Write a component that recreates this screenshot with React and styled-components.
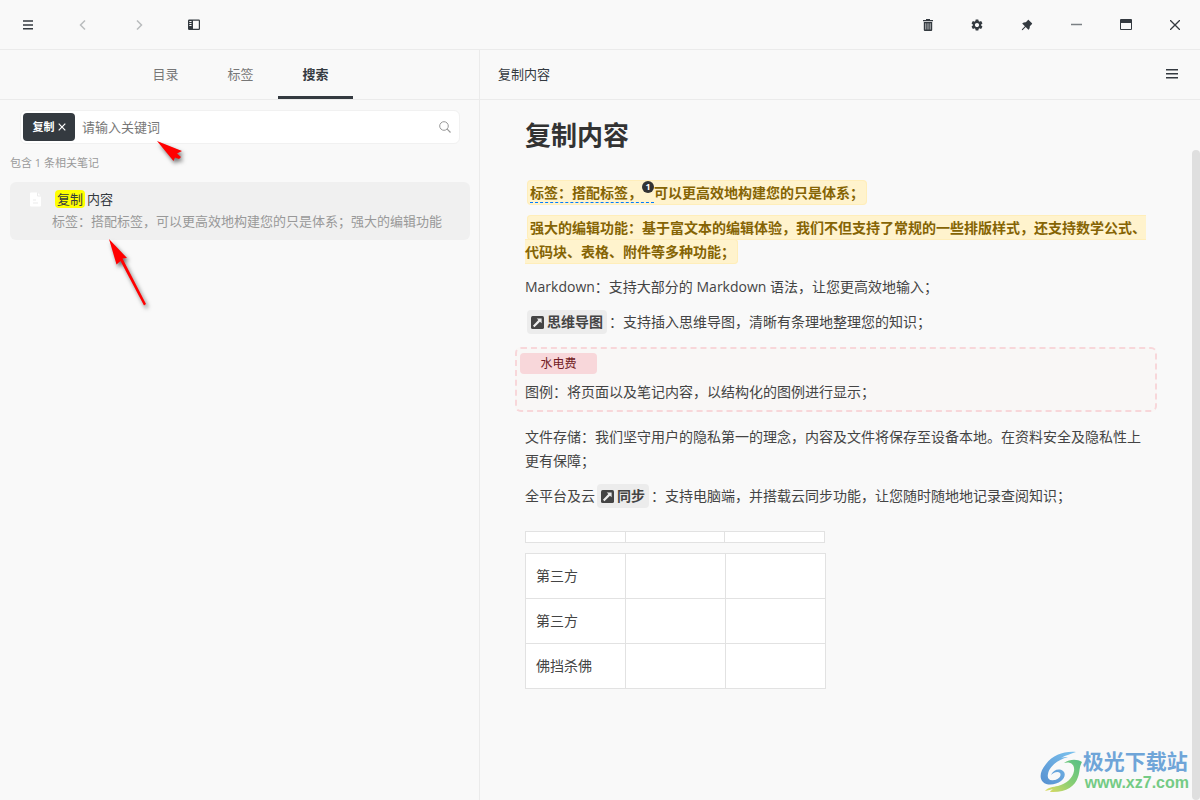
import React from "react";
import styled, { createGlobalStyle, css } from "styled-components";
import { MdSettings } from "react-icons/md";
import { AiFillPushpin } from "react-icons/ai";

const GlobalStyle = createGlobalStyle`
  * {
    box-sizing: border-box;
  }

  body {
    margin: 0;
    background: #f9f9f9;
    color: #343a40;
    font-family: "Open Sans", "Noto Sans CJK SC", sans-serif;
    font-size: 13px;
    line-height: 20px;
    text-spacing-trim: space-all;
  }

  button, input {
    font: inherit;
    color: inherit;
    border: 0;
    padding: 0;
    background: none;
  }

  svg {
    display: block;
  }
`;

const Page = styled.div`
  position: relative;
  min-height: 100vh;
  display: flex;
  flex-direction: column;
`;

const Toolbar = styled.header`
  display: flex;
  justify-content: space-between;
  height: 50px;
  border-bottom: 1px solid #ebebeb;
`;

const ToolGroup = styled.div`
  display: grid;
  grid-auto-flow: column;
  grid-auto-columns: 1fr;
  width: ${props => props.$width}px;
`;

const ToolButton = styled.button`
  display: flex;
  align-items: center;
  justify-content: center;
  color: ${props => (props.disabled ? "#b9bcbe" : "#343a40")};
`;

const Columns = styled.div`
  flex: 1;
  display: grid;
  grid-template-columns: 2fr 3fr;
`;

const Sidebar = styled.aside`
  border-right: 1px solid #ebebeb;
`;

const Tabs = styled.nav`
  display: flex;
  justify-content: center;
  height: 50px;
  padding-left: 2px;
  border-bottom: 1px solid #ebebeb;
`;

const Tab = styled.button`
  width: 75px;
  padding-top: 1px;
  color: #777;
  border-bottom: 3px solid transparent;
  ${props =>
    props.$active &&
    css`
      color: #343a40;
      font-weight: 600;
      border-bottom-color: #343a40;
    `}
`;

const SearchBox = styled.form`
  display: flex;
  align-items: center;
  height: 34px;
  margin: 10px 19px 0 20px;
  padding: 2px;
  background: #fff;
  border: 1px solid #f1f1f1;
  border-radius: 6px;
`;

const Chip = styled.button`
  display: flex;
  align-items: center;
  justify-content: center;
  gap: 3px;
  width: 52px;
  height: 28px;
  background: #343a40;
  border-radius: 4px;
  color: #fff;
  font-size: 11px;
  font-weight: 600;
`;

const SearchInput = styled.input`
  flex: 1;
  min-width: 0;
  padding: 0 7px 1px;
  outline: none;

  &::placeholder {
    color: #777;
    opacity: 1;
  }
`;

const SearchButton = styled.button`
  margin-right: 6px;
  color: #999;
`;

const ResultCount = styled.p`
  margin: 9px 10px;
  font-size: 11px;
  color: #999;
`;

const Result = styled.a`
  display: block;
  height: 58px;
  margin: 0 9px 0 10px;
  padding: 6px 18px 0;
  background: #f0f0f0;
  border-radius: 6px;
  color: inherit;
  text-decoration: none;
`;

const ResultTitle = styled.div`
  display: flex;
  align-items: center;
  gap: 12px;
  height: 22px;
`;

const Match = styled.mark`
  margin-right: 2px;
  padding: 0 2px;
  background: #ff0;
  border-radius: 4px;
  color: inherit;
`;

const ResultText = styled.div`
  padding-left: 24px;
  color: #999;
  line-height: 22px;
  white-space: nowrap;
  overflow: hidden;
`;

const Note = styled.main`
  display: grid;
  grid-template-rows: 50px 1fr;
`;

const NoteBar = styled.div`
  display: flex;
  align-items: center;
  justify-content: space-between;
  padding: 0 22px 1px 18px;
  border-bottom: 1px solid #ebebeb;
`;

const NoteBody = styled.div`
  display: flex;
`;

const ScrollThumb = styled.div`
  flex: none;
  width: 8px;
  margin-top: 50px;
  background: #dfdfdf;
  border-radius: 4px;
`;

const Article = styled.article`
  flex: 1;
  padding: 15px 45px 20px;
  color: #444;
  font-size: 14px;
  line-height: 24px;
`;

const Title = styled.h1`
  margin: 0 0 26px;
  color: #333;
  font-size: 26px;
  line-height: 40px;
`;

const Paragraph = styled.p`
  margin: 0 0 11px;
`;

const Highlight = styled.strong`
  margin-left: 2px;
  padding: 2px;
  background: #fff3cd;
  border: 1px solid #ffeeba;
  border-radius: 4px;
  color: #856404;
`;

const Annotated = styled.span`
  border-bottom: 1px dashed #007bff;
`;

const NoteNumber = styled.sup`
  display: inline-flex;
  align-items: center;
  justify-content: center;
  width: 12px;
  height: 12px;
  background: #333;
  border-radius: 50%;
  color: #fff;
  font-size: 9px;
  line-height: 12px;
  vertical-align: 8px;
`;

const NoteLink = styled.a`
  display: inline-flex;
  align-items: center;
  gap: 3px;
  margin: 0 2px;
  padding: 0 4px;
  background: #ececec;
  border-radius: 4px;
  color: inherit;
  font-weight: bold;
  text-decoration: none;
  vertical-align: top;
`;

const Legend = styled.section`
  margin: 13px -10px;
  padding: 4px 8px 6px;
  background: #f9f7f6;
  border: 2px dashed #f8d7da;
  border-radius: 6px;
`;

const LegendTag = styled.div`
  width: 77px;
  margin: 0 0 6px -5px;
  background: #f8d7da;
  border-radius: 4px;
  color: #721c24;
  font-size: 12px;
  line-height: 21px;
  text-align: center;
`;

const Table = styled.table`
  width: ${props => props.$width}px;
  margin-top: ${props => props.$top}px;
  border-collapse: collapse;
  table-layout: fixed;
  background: #fff;

  th,
  td {
    height: ${props => props.$row}px;
    padding: 0 10px;
    border: 1px solid #e2e2e2;
    text-align: left;
  }
`;

const Arrow = styled.svg`
  position: absolute;
  left: ${props => props.$x}px;
  top: ${props => props.$y}px;
  filter: drop-shadow(2px 3px 2px rgba(0, 0, 0, 0.55));
  overflow: visible;
  pointer-events: none;
`;

const Watermark = styled.a`
  position: absolute;
  right: 11px;
  bottom: 7px;
  display: flex;
  align-items: center;
  text-decoration: none;
`;

const SiteName = styled.div`
  color: #6fa5d8;
  font-size: 21px;
  font-weight: bold;
  line-height: 23px;
`;

const SiteUrl = styled.div`
  padding-left: 2px;
  color: #74cb85;
  font-family: "Liberation Sans", sans-serif;
  font-size: 16px;
  font-weight: bold;
  line-height: 20px;
`;

const Lines = () => (
  <svg width="10" height="10" viewBox="0 0 10 10" fill="currentColor">
    <path d="M0 .3h10v1.500H0zM0 4.200h10v1.500H0zM0 8.100h10v1.500H0z" />
  </svg>
);

const Chevron = ({ d }) => (
  <svg width="12" height="12" viewBox="0 0 12 12" fill="none" stroke="currentColor" strokeWidth="1.500">
    <path d={d} />
  </svg>
);

const PanelIcon = () => (
  <svg width="12" height="12" viewBox="0 0 12 12" fill="currentColor">
    <path
      fillRule="evenodd"
      d="M1.200.5h9.600A1.200 1.200 0 0 1 12 1.700v8.100A1.200 1.200 0 0 1 10.800 11H1.200A1.200 1.200 0 0 1 0 9.800V1.700A1.200 1.200 0 0 1 1.200.5zM5 1.700v8.100h5.800V1.700zM1.300 2v1h2.200V2zM1.300 4v1h2.200V4zM1.300 6v1h2.200V6z"
    />
  </svg>
);

const TrashIcon = () => (
  <svg width="10" height="12" viewBox="0 0 10 12" fill="currentColor">
    <path
      fillRule="evenodd"
      d="M3 0h4v1h3v1.300H0V1h3zM.8 3h8.400v8a1 1 0 0 1-1 1H1.800a1 1 0 0 1-1-1zM2.500 4.300v6.200h.7V4.300zM4.650 4.300v6.200h.7V4.300zM6.800 4.300v6.200h.7V4.300z"
    />
  </svg>
);

const WindowIcon = () => (
  <svg width="12" height="11" viewBox="0 0 12 11" fill="currentColor">
    <path
      fillRule="evenodd"
      d="M1 0h10a1 1 0 0 1 1 1v9a1 1 0 0 1-1 1H1a1 1 0 0 1-1-1V1a1 1 0 0 1 1-1zM1 4v6h10V4z"
    />
  </svg>
);

const JumpIcon = () => (
  <svg width="13" height="13" viewBox="0 0 12 12">
    <rect width="12" height="12" rx="1.500" fill="#444" />
    <path d="M5.300 2.200h4.500v4.500L8.300 5.200 3.200 10.300 1.800 8.900l5-5.200z" fill="#ececec" />
  </svg>
);

const FileIcon = () => (
  <svg width="15" height="15" viewBox="0 0 15 15">
    <path d="M3 .5h6.500L13 4v9.500a1 1 0 0 1-1 1H3a1 1 0 0 1-1-1v-12a1 1 0 0 1 1-1z" fill="#fff" />
    <path d="M9.500.5V4H13M5 8h3M5 11h5" fill="none" stroke="#ebebeb" />
  </svg>
);

const SiteLogo = () => (
  <svg width="43" height="42" viewBox="0 0 43 42">
    <defs>
      <linearGradient id="sky" x1="0" y1="1" x2="1" y2="0">
        <stop offset="0" stopColor="#568fd0" />
        <stop offset="1" stopColor="#7cc3ee" />
      </linearGradient>
      <linearGradient id="leaf" x1="0" y1="1" x2="1" y2="0">
        <stop offset="0" stopColor="#e2dc62" />
        <stop offset="0.5" stopColor="#86ce74" />
        <stop offset="1" stopColor="#55bf86" />
      </linearGradient>
    </defs>
    <path
      d="M36 1C24 0 13 4 6 13 0 20-1 27 3 31c4 4 13 3 18-1 4-3 5-8 2-10-4-3-10-1-12 4 3-3 7-4 9-2 2 3-2 7-6 7-5 1-7-2-6-6 1-7 9-14 20-17-3 0-5 0-7 1 5-3 10-4 15-6z"
      fill="url(#sky)"
    />
    <path
      d="M42 11c-5-3-12-3-18 1 7-2 11 2 10 8-1 7-8 13-16 15-5 1-10 1-13 5 3-1 6-1 8-2-1 1-2 1-3 3 15 1 25-5 28-15 2-5 1-10 4-15z"
      fill="url(#leaf)"
    />
  </svg>
);

const rows = ["第三方", "第三方", "佛挡杀佛"];

const App = () => {
  return (
    <Page>
      <GlobalStyle />
      <Toolbar>
        <ToolGroup $width={222}>
          <ToolButton aria-label="菜单">
            <Lines />
          </ToolButton>
          <ToolButton aria-label="后退" disabled>
            <Chevron d="M8 1.500 3.500 6 8 10.500" />
          </ToolButton>
          <ToolButton aria-label="前进" disabled>
            <Chevron d="M4 1.500 8.500 6 4 10.500" />
          </ToolButton>
          <ToolButton aria-label="侧边栏">
            <PanelIcon />
          </ToolButton>
        </ToolGroup>
        <ToolGroup $width={297}>
          <ToolButton aria-label="回收站">
            <TrashIcon />
          </ToolButton>
          <ToolButton aria-label="设置">
            <MdSettings size={14} />
          </ToolButton>
          <ToolButton aria-label="置顶">
            <AiFillPushpin size={14} />
          </ToolButton>
          <ToolButton aria-label="最小化">
            <svg width="11" height="11" viewBox="0 0 11 11">
              <path d="M0 5.500h11" stroke="#7b8084" strokeWidth="1.500" />
            </svg>
          </ToolButton>
          <ToolButton aria-label="最大化">
            <WindowIcon />
          </ToolButton>
          <ToolButton aria-label="关闭">
            <svg width="10" height="10" viewBox="0 0 10 10">
              <path d="M0 0l10 10M10 0 0 10" stroke="currentColor" strokeWidth="1.300" />
            </svg>
          </ToolButton>
        </ToolGroup>
      </Toolbar>

      <Columns>
        <Sidebar>
          <Tabs>
            <Tab>目录</Tab>
            <Tab>标签</Tab>
            <Tab $active>搜索</Tab>
          </Tabs>
          <SearchBox>
            <Chip type="button">
              复制
              <svg width="8" height="8" viewBox="0 0 8 8">
                <path d="M.7.7l6.600 6.600M7.300.7.7 7.300" stroke="#fff" strokeWidth="1.200" />
              </svg>
            </Chip>
            <SearchInput aria-label="关键词" placeholder="请输入关键词" />
            <SearchButton type="button" aria-label="搜索">
              <svg width="12" height="12" viewBox="0 0 12 12" fill="none" stroke="currentColor">
                <circle cx="5" cy="5" r="4.300" />
                <path d="M8.200 8.200l3.300 3.300" strokeWidth="1.200" />
              </svg>
            </SearchButton>
          </SearchBox>
          <ResultCount>包含 1 条相关笔记</ResultCount>
          <Result href="#note">
            <ResultTitle>
              <FileIcon />
              <span>
                <Match>复制</Match>内容
              </span>
            </ResultTitle>
            <ResultText>标签：搭配标签，可以更高效地构建您的只是体系；强大的编辑功能</ResultText>
          </Result>
        </Sidebar>

        <Note>
          <NoteBar>
            <span>复制内容</span>
            <ToolButton aria-label="大纲">
              <svg width="12" height="12" viewBox="0 0 12 12" fill="currentColor">
                <path d="M0 1h12v1.500H0zM0 5h12v1.500H0zM0 9h12v1.500H0z" />
              </svg>
            </ToolButton>
          </NoteBar>
          <NoteBody>
            <Article id="note">
              <Title>复制内容</Title>
              <Paragraph>
                <Highlight>
                  <Annotated>
                    标签：搭配标签，<NoteNumber>1</NoteNumber>
                  </Annotated>
                  可以更高效地构建您的只是体系；
                </Highlight>
              </Paragraph>
              <Paragraph>
                <Highlight>
                  强大的编辑功能：基于富文本的编辑体验，我们不但支持了常规的一些排版样式，还支持数学公式、代码块、表格、附件等多种功能；
                </Highlight>
              </Paragraph>
              <Paragraph>Markdown：支持大部分的 Markdown 语法，让您更高效地输入；</Paragraph>
              <Paragraph>
                <NoteLink href="#mind">
                  <JumpIcon />
                  思维导图
                </NoteLink>
                ：支持插入思维导图，清晰有条理地整理您的知识；
              </Paragraph>
              <Legend>
                <LegendTag>水电费</LegendTag>
                图例：将页面以及笔记内容，以结构化的图例进行显示；
              </Legend>
              <Paragraph>
                文件存储：我们坚守用户的隐私第一的理念，内容及文件将保存至设备本地。在资料安全及隐私性上更有保障；
              </Paragraph>
              <Paragraph>
                全平台及云
                <NoteLink href="#sync">
                  <JumpIcon />
                  同步
                </NoteLink>
                ：支持电脑端，并搭载云同步功能，让您随时随地地记录查阅知识；
              </Paragraph>
              <Table $width={300} $top={23} $row={11}>
                <thead>
                  <tr>
                    <th />
                    <th />
                    <th />
                  </tr>
                </thead>
              </Table>
              <Table $width={301} $top={10} $row={45}>
                <tbody>
                  {rows.map((name, i) => (
                    <tr key={i}>
                      <td>{name}</td>
                      <td />
                      <td />
                    </tr>
                  ))}
                </tbody>
              </Table>
            </Article>
            <ScrollThumb />
          </NoteBody>
        </Note>
      </Columns>

      <Arrow $x={157} $y={141} width="26" height="20" viewBox="0 0 26 20">
        <path d="M0 0l25 10-5 2.500 4 3.500-2 2-4-1.500-1.500 3.500z" fill="#f00" />
      </Arrow>
      <Arrow $x={109} $y={239} width="38" height="67" viewBox="0 0 38 67">
        <path d="M0 0l18 19-4.500.5L37 65l-2 1.500L11.500 22 7.500 25.500z" fill="#f00" />
      </Arrow>
      <Watermark href="#site">
        <SiteLogo />
        <div>
          <SiteName>极光下载站</SiteName>
          <SiteUrl>www.xz7.com</SiteUrl>
        </div>
      </Watermark>
    </Page>
  );
};

export default App;
